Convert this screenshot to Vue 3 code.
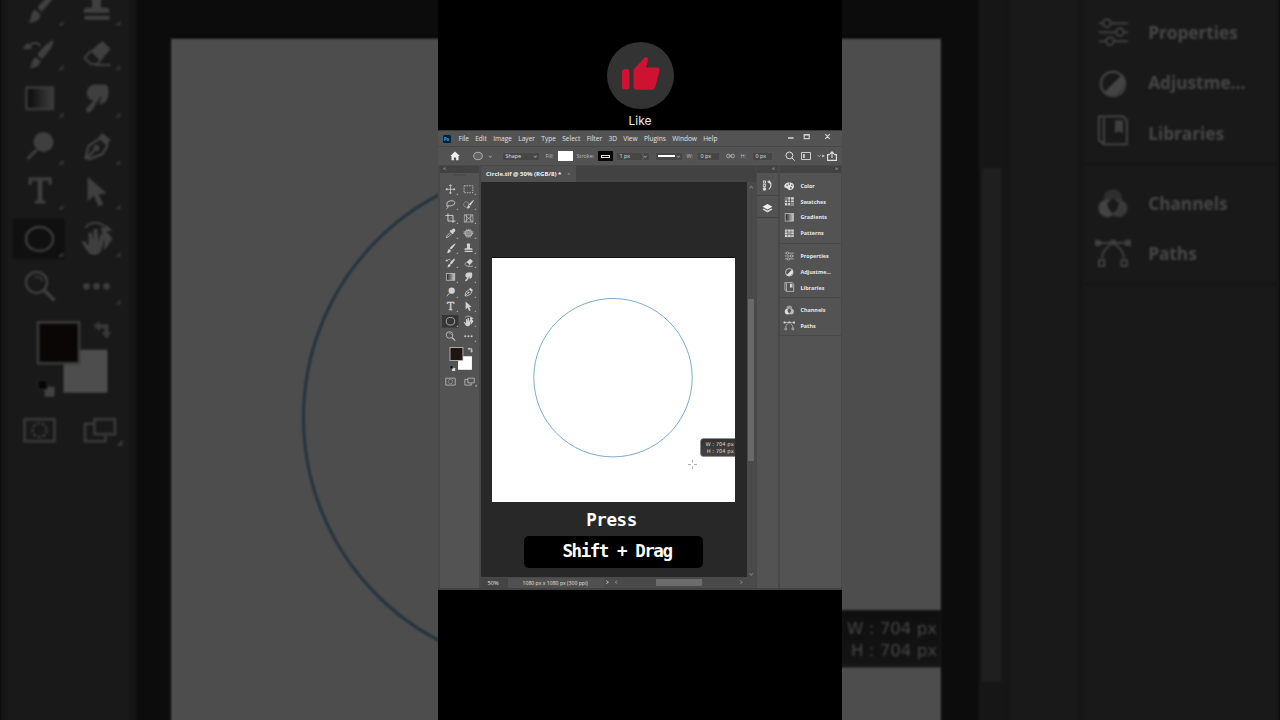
<template>
  <div class="stage">
    <div v-for="layer in layers" :key="layer" class="editor" :class="layer">
      <div class="menu-bar">
        <span class="ps-logo">Ps</span>
        <nav class="menu">
          <span v-for="m in menus" :key="m">{{ m }}</span>
        </nav>
        <svg class="window-btns" viewBox="0 0 48 16">
          <g fill="none" stroke="#d0d0d0" stroke-width="1.2">
            <path d="M1 7h5.6" stroke-width="1.6" />
            <path d="M17.2 3.6h5v4h-5z" />
            <path d="M17 4h5.4M38.2 3.2l4.6 4.6M42.8 3.2l-4.6 4.6" />
          </g>
        </svg>
      </div>

      <div class="options-bar">
        <svg class="o-home" viewBox="0 0 10 10"><path d="M5 .6L.2 5h1.3v4.3h2.4V6.4h2.2v2.9h2.4V5h1.3z" fill="#eee" /></svg>
        <svg class="o-ellipse" viewBox="0 0 10 10"><ellipse cx="5" cy="5" rx="4.3" ry="3.7" fill="#636363" stroke="#c4c4c4" stroke-width=".8" /></svg>
        <i class="chev o-chev1"></i>
        <span class="field o-shape">Shape<i class="chev"></i></span>
        <span class="o-label o-fill">Fill:</span>
        <span class="o-white"></span>
        <span class="o-label o-strokelabel">Stroke:</span>
        <span class="o-strokebox"><b></b></span>
        <span class="field o-px">1 px</span>
        <span class="field o-drop"><i class="chev"></i></span>
        <span class="field o-line"><b></b><i class="chev"></i></span>
        <span class="o-label o-w">W:</span>
        <span class="field o-wf">0 px</span>
        <svg class="o-link" viewBox="0 0 10 6"><g fill="none" stroke="#bbb" stroke-width=".9"><rect x=".7" y="1" width="3.8" height="4" rx="1.8" /><rect x="5.5" y="1" width="3.8" height="4" rx="1.8" /><path d="M3 3h4" /></g></svg>
        <span class="o-label o-h">H:</span>
        <span class="field o-hf">0 px</span>
        <svg class="o-search" viewBox="0 0 10 10"><g fill="none" stroke="#ddd" stroke-width="1"><circle cx="4.4" cy="4.4" r="3.4" /><path d="M6.8 6.8L9.6 9.6" /></g></svg>
        <svg class="o-layout" viewBox="0 0 10 10"><path d="M.5 1.5h9v7h-9z" fill="none" stroke="#ccc" /><path d="M2 3h1.8v4H2z" fill="#ccc" /></svg>
        <svg class="o-arrows" viewBox="0 0 8 6"><path d="M.5 2l1.7 1.7L3.9 2" fill="none" stroke="#aaa" stroke-width=".9" /><path d="M5.2 1.4L7.8 3 5.2 4.6z" fill="#ccc" /></svg>
        <svg class="o-share" viewBox="0 0 10 10"><path d="M2.8 3.6H.6v5.8h8.8V3.6H7.2M5 7V1M3 2.8L5 .8l2 2" fill="none" stroke="#e4e4e4" stroke-width="1.1" /></svg>
      </div>

      <div class="body">
        <div class="toolbox">
          <div class="strip left">«</div>
          <div class="grip"></div>
          <div class="tools">
            <span v-for="(t, i) in tools" :key="i" class="tool" :class="{ active: i === 18 }">
              <svg viewBox="0 0 60 46.4" v-html="t + (i === 20 ? '' : corner)"></svg>
            </span>
          </div>
          <svg class="swatches" viewBox="8 308 120 150">
            <rect x="62" y="350" width="44" height="43" fill="#fff" />
            <rect x="36.5" y="322.5" width="41" height="41" fill="#211514" stroke="#c2c2c2" stroke-width="2.6" />
            <g fill="#bdbdbd">
              <path d="M92 326l6-4.5v3h9v8h3l-5 6.500-5-6.500h3v-4h-5v3z" />
              <path d="M43 387h10v10H43z" fill="#d8d8d8" />
              <path d="M36.500 380.500h9v9h-9z" fill="#111" stroke="#888" />
              <path d="M115 446l6-6v6z" />
            </g>
            <g fill="none" stroke="#c0c0c0" stroke-width="2.5">
              <path d="M23 419.500h30v22H23z" />
              <circle cx="38" cy="430.500" r="7" stroke-dasharray="3 2" />
              <path d="M93 424H83.500v17.500H104V436" />
              <path d="M93 419.500h20.500v15H93z" />
            </g>
          </svg>
        </div>

        <div class="workspace">
          <div class="tabs">
            <div class="tab">Circle.tif @ 50% (RGB/8) * <span>×</span></div>
          </div>
          <div class="view">
            <div class="pasteboard">
              <div class="artboard">
                <svg class="drawing" viewBox="0 0 243 244">
                  <circle cx="121" cy="119.7" r="79.2" fill="none" stroke="#6aa3c2" stroke-width=".9" />
                  <path d="M196 206.500h3M202 206.500h3M200.500 202v2.500M200.500 208.500v2.500" stroke="#777" stroke-width=".6" />
                </svg>
                <div class="size-tip">
                  <span>W : 704 px</span>
                  <span>H : 704 px</span>
                </div>
              </div>
            </div>
            <div class="v-scroll">
              <i class="arrow up"></i>
              <b></b>
              <i class="arrow down"></i>
            </div>
          </div>
          <div class="status">
            <span class="zoom">50%</span>
            <span class="doc">1080 px x 1080 px (300 ppi)</span>
            <i class="arrow right first"></i>
            <i class="arrow back"></i>
            <b></b>
            <i class="arrow right last"></i>
          </div>
        </div>

        <div class="icon-dock">
          <div class="strip">«</div>
          <div class="dock-cell">
            <svg viewBox="0 0 12 12"><g fill="none" stroke="#ddd" stroke-width="1"><path d="M1.5 1h2.400v2.400H1.500zM1.500 4.800h2.400v2.400H1.500z" /><path d="M1.500 8.600h2.400V11H1.500z" fill="#ddd" /><path d="M6.500 1.800c4 0 4.500 5 1 8.400" stroke-width="1.3" /></g><path d="M8.500 0L5.600 2l2.900 2z" fill="#ddd" /></svg>
          </div>
          <div class="dock-cell">
            <svg viewBox="0 0 12 12"><path d="M6 1l5.400 3L6 7 .6 4z" fill="#f0f0f0" /><path d="M1.800 6L.6 7 6 10.300 11.400 7l-1.200-1L6 8.300z" fill="#d8d8d8" /></svg>
          </div>
        </div>

        <div class="panels">
          <div class="strip">»</div>
          <div v-for="(g, gi) in panelGroups" :key="gi" class="group" :class="'g' + gi">
            <div v-for="p in g" :key="p.name" class="panel-row">
              <svg viewBox="0 0 40 40" v-html="p.icon"></svg>
              <span>{{ p.name }}</span>
            </div>
          </div>
        </div>
      </div>
    </div>

    <div class="like">
      <div class="like-circle">
        <svg viewBox="0 0 40 36">
          <rect x="1" y="13" width="7.5" height="20.5" rx="3.2" fill="#cf1232" />
          <path d="M12.500 15.500c0-1.500.5-2.500 1.500-3.500L24 1.300c1-.9 2.900 0 2.900 1.700 0 3-1 5.400-2 8.500H36c2 0 3 1.700 2.500 3.400l-4.100 15.600c-.5 2-1.700 3.200-3.600 3.200H16c-2 0-3.500-1.500-3.500-3.500z" fill="#cf1232" />
        </svg>
      </div>
      <span>Like</span>
    </div>

    <div class="caption">
      <div class="press">Press</div>
      <div class="keys">Shift + Drag</div>
    </div>
  </div>
</template>

<script setup>
const layers = ['backdrop', 'front']

const menus = ['File', 'Edit', 'Image', 'Layer', 'Type', 'Select', 'Filter', '3D', 'View', 'Plugins', 'Window', 'Help']

const corner = '<path d="M48.500 41l5.500-5.500V41z" fill="#a8a8a8"/>'
const line = (d, w = 2.5) => `<path d="${d}" fill="none" stroke="#d2d2d2" stroke-width="${w}" stroke-linejoin="round"/>`
const solid = (d, c = '#d2d2d2') => `<path d="${d}" fill="${c}"/>`
const gradient = (x, y, w, h) =>
  `<defs><linearGradient id="ramp"><stop offset="0" stop-color="#222"/><stop offset="1" stop-color="#ccc"/></linearGradient></defs><rect x="${x}" y="${y}" width="${w}" height="${h}" fill="url(#ramp)" stroke="#c0c0c0" stroke-width="2.5"/>`

// two columns, left to right, top to bottom
const tools = [
  // move, marquee
  line('M30 12v22M18 23h24') + solid('M30 7l5 6H25zM30 39l5-6H25zM14 23l6-5v10zM46 23l-6-5v10z'),
  '<rect x="16" y="12" width="28" height="22" fill="none" stroke="#d2d2d2" stroke-width="2.5" stroke-dasharray="5 3"/>',
  // lasso, quick selection
  '<ellipse cx="31" cy="20" rx="13" ry="8" transform="rotate(-12 31 20)" fill="none" stroke="#d2d2d2" stroke-width="2.5"/>' + line('M20 25c-5 4 1 8 4 4M21 30c2 4-1 7-4 8'),
  '<ellipse cx="23" cy="24" rx="8" ry="9" fill="none" stroke="#c4c4c4" stroke-width="2.2" stroke-dasharray="4 2"/>' + solid('M46 9L31 23l5 5 11-17zM29 25l6 5c-1 6-6 7-11 6 4-3 3-7 5-11z'),
  // crop, frame
  line('M22 8v24h24M14 14h24v24', 3) + line('M24 30L36 17', 1),
  line('M17 12h27v23H17zM17 12l27 23M44 12L17 35M24 12v23M37 12v23', 1.8),
  // eyedropper, patch
  solid('M44 10c3 3 1 6-2 9l-3 3 1 2-3 2-10-10 3-3 2 1 4-4c3-3 6-2 8 0z') + line('M30 20L19 31l-2 6 6-2 11-11'),
  '<rect x="19" y="14" width="22" height="18" rx="6" fill="#8f8f8f" stroke="#d2d2d2" stroke-width="2"/>' + line('M25 9v5M30 9v5M35 9v5M25 32v5M30 32v5M35 32v5M14 19h5M14 24h5M41 19h5M41 24h5', 1.8),
  // brush, stamp
  solid('M46 7c-3 0-17 13-18 16l4 4C36 24 46 11 46 7zM26 25l5 5c-1 6-6 8-12 8 2-2 2-4 3-8 0-3 2-4 4-5z'),
  solid('M30 7c5 0 6 4 5 8-1 3-1 6 0 8h5c2 0 3 2 3 5H17c0-3 1-5 3-5h5c1-2 1-5 0-8-1-4 0-8 5-8zM18 31h25v4H18z'),
  // history brush, eraser
  solid('M44 11c-4 0-15 12-16 15l4 4c4-3 13-14 12-19zM26 28l5 4c-1 6-6 7-11 7 3-3 2-9 6-11zM13 20l5-6 5 6z') + line('M19 17c6-5 10-3 12 0', 2),
  solid('M36 12l8 8-10 12-10-10z') + line('M24 22l-6 7 6 6h6l4-3M28 36h16', 2),
  // gradient, smudge
  gradient(17, 11, 26.5, 21.5),
  solid('M23 10l4-2h13c2 3 3 9 1 13-1 4-4 7-8 7l2-5-11 12c-2 2-6 0-4-3l7-8c-7-1-9-9-4-14z') + '<path d="M35 20l-7 10" stroke="#606060" stroke-width="1.5"/>',
  // dodge, pen
  '<circle cx="34" cy="18" r="10" fill="#d2d2d2"/>' + line('M27 26l-9 9', 3),
  line('M34 14l7 7-5 9-13 5-4-1 3-12zM20 34l8-8') + solid('M36 9l8 7-4 5-8-8z') + '<circle cx="30" cy="24" r="3" fill="#d2d2d2"/>',
  // type, path selection
  '<text x="30.500" y="35" font-family="DejaVu Serif, serif" font-size="34" text-anchor="middle" fill="#d2d2d2" stroke="#d2d2d2" stroke-width="1.2">T</text>',
  solid('M21 8v25l6-6 5 11 5-2-5-10 8-1z'),
  // ellipse, rotate view
  '<ellipse cx="30" cy="23" rx="13.500" ry="12" fill="none" stroke="#c2c2c2" stroke-width="2.5"/>',
  solid('M15 26l3-1 4 5V17l3-1 2 9V13l4 0 1 13 2-8 4 1-2 11c-1 6-4 9-8 9-7 0-8-6-13-13zM34 12l3-1 9 12-9 12 1-10zM46 15h-11l5-6z') + line('M19 12c4-6 12-7 19-2', 2),
  // zoom, more
  '<circle cx="27" cy="19" r="10.500" fill="none" stroke="#c8c8c8" stroke-width="2.5"/>' + line('M35 27l10 10', 3.5) + line('M25 14c4-2 8 1 8 4', 1.5),
  '<g fill="#c8c8c8"><circle cx="20" cy="23" r="3.300"/><circle cx="30" cy="23" r="3.300"/><circle cx="40" cy="23" r="3.300"/></g>'
]

const panelGroups = [
  [
    { name: 'Color', icon: solid('M20 8c10 0 15 5 15 11 0 8-6 13-14 13-5 0-5-5-8-6-3 0-9-1-9-6C4 12 12 8 20 8z', '#e2e2e2') + '<g fill="#535353"><circle cx="13" cy="17" r="2.500"/><circle cx="20" cy="13" r="2.500"/><circle cx="28" cy="17" r="2.500"/><circle cx="25" cy="25" r="3"/></g>' },
    { name: 'Swatches', icon: solid('M6 7h28v26H6z', '#d8d8d8') + '<path d="M15 7v26M24 7v26M6 16h28M6 24h28" stroke="#444" stroke-width="2.500"/><path d="M6 7h9v9H6z" fill="#777"/><path d="M24 24h10v9H24z" fill="#888"/>' },
    { name: 'Gradients', icon: gradient(7, 8, 26, 24) },
    { name: 'Patterns', icon: solid('M6 8h28v24H6z', '#d8d8d8') + '<path d="M15 8v24M25 8v24M6 16h28M6 24h28" stroke="#555" stroke-width="2"/><path d="M17 17l6 6M23 17l-6 6M8 10l5 4M27 26l5 4" stroke="#666" stroke-width="1.500"/>' }
  ],
  [
    { name: 'Properties', icon: line('M6 10h4M18 10h17M6 19h17M31 19h4M6 28h7M21 28h14', 2) + '<g fill="none" stroke="#d2d2d2" stroke-width="2"><circle cx="14" cy="10" r="3.800"/><circle cx="27" cy="19" r="3.800"/><circle cx="17" cy="28" r="3.800"/></g>' },
    { name: 'Adjustme...', icon: '<circle cx="20" cy="20" r="12" fill="none" stroke="#d8d8d8" stroke-width="2.500"/>' + solid('M29 11a13 13 0 0 1-18 18z', '#e2e2e2') },
    { name: 'Libraries', icon: line('M6 5h24l4 4v24H11l-5-4zM11 7v25', 2.2) + solid('M22 9h8v13l-4-2-4 2z') }
  ],
  [
    { name: 'Channels', icon: '<circle cx="20" cy="14" r="9" fill="#9a9a9a"/><circle cx="14.500" cy="24" r="9" fill="#dcdcdc"/><circle cx="25.500" cy="24" r="9" fill="#bcbcbc"/>' + solid('M20 14l6 5-2 6-4 4-4-4-2-6z', '#555') },
    { name: 'Paths', icon: solid('M2 5h6v6H2zM32 5h6v6h-6zM17 5h6v5h-6z') + line('M6 8h28M17 10c-5 4-8 8-8 13M23 10c5 4 8 8 8 13M6 25h5.500v6H6zM28.500 25H34v6h-5.500z', 2) }
  ]
]
</script>

<style>
body { background: #000; overflow: hidden; }
</style>

<style scoped>
.stage { position: relative; width: 1280px; height: 720px; overflow: hidden; background: #000; font-family: "Open Sans", sans-serif; }
.stage svg { display: block; }

/* the editor is drawn twice: dimmed full-width copy behind, small one in front */
.editor { position: absolute; width: 404px; height: 460px; display: flex; flex-direction: column; background: #535353; color: #e0e0e0; box-sizing: border-box; border-top: 1px solid #3a3a3a; border-bottom: 2px solid #424242; }
.backdrop { left: 0; top: -367.5px; transform: scale(3.168); transform-origin: 0 0; opacity: 0.3; filter: blur(0.35px); }
.front { left: 438px; top: 130px; box-shadow: 0 -130px 0 130px #000, 0 200px 0 0 #000; clip-path: inset(-130px 0 -130px 0); }

.menu-bar { display: flex; align-items: center; height: 16px; flex: none; padding-left: 4.5px; border-bottom: 1px solid #474747; box-sizing: border-box; }
.ps-logo { width: 8px; height: 8px; line-height: 8px; border-radius: 1.5px; background: #001e36; color: #31a8ff; font-size: 5px; font-weight: 700; text-align: center; }
.menu { display: flex; gap: 6.35px; margin-left: 8px; font-size: 6.55px; line-height: 15px; white-space: nowrap; font-weight: 500; }
.window-btns { width: 48px; height: 16px; margin-left: auto; margin-right: 7.5px; }

.options-bar { display: flex; align-items: center; height: 19px; flex: none; font-size: 5.4px; line-height: 8px; white-space: nowrap; border-bottom: 1px solid #484848; box-sizing: border-box; }
.options-bar > * { flex: none; box-sizing: border-box; }
.field { height: 9px; display: flex; align-items: center; background: #464646; border: 0.5px solid #545454; padding-left: 3px; }
.field .chev { margin: 0 2px 0 auto; }
.chev { width: 2.5px; height: 2.5px; border: solid #999; border-width: 0 0.6px 0.6px 0; transform: translateY(-0.5px) rotate(45deg) scale(0.85); box-sizing: border-box; }
.o-label { color: #bcbcbc; }
.o-home { width: 10px; height: 10px; margin-left: 12px; }
.o-ellipse { width: 10px; height: 10px; margin-left: 13px; }
.o-chev1 { margin-left: 5.5px; }
.o-shape { width: 38px; margin-left: 10.5px; }
.o-fill { width: 12px; margin-left: 6px; }
.o-white { width: 15px; height: 9.5px; background: #fff; }
.o-strokelabel { width: 20px; margin-left: 4px; }
.o-strokebox { width: 15px; height: 9.5px; margin-left: 1px; background: #050505; display: flex; align-items: center; justify-content: center; }
.o-strokebox b { width: 9px; height: 3px; border: 1px solid #ddd; box-sizing: border-box; }
.o-px { width: 27px; margin-left: 3px; }
.o-drop { width: 7px; padding: 0; }
.o-line { width: 28px; margin-left: 5px; padding-left: 2px; }
.o-line b { width: 17px; height: 1.2px; background: #fff; }
.o-w { width: 9px; margin-left: 4px; }
.o-wf { width: 23px; margin-left: 1px; }
.o-link { width: 9px; height: 6px; margin-left: 6px; }
.o-h { width: 9px; margin-left: 6px; }
.o-hf { width: 21px; margin-left: 2px; }
.o-search { width: 10px; height: 10px; margin-left: 12px; }
.o-layout { width: 10px; height: 10px; margin-left: 6.5px; }
.o-arrows { width: 8px; height: 6px; margin-left: 5.5px; }
.o-share { width: 10px; height: 10px; margin-left: 2px; }

.body { flex: 1; min-height: 0; display: flex; padding-left: 2px; background: #484848; }
.strip { height: 7px; line-height: 5.5px; flex: none; background: #424242; color: #bbb; font-size: 6px; text-align: right; padding-right: 3px; box-sizing: border-box; }
.strip.left { text-align: left; padding-left: 3px; }

.toolbox { width: 39px; background: #535353; display: flex; flex-direction: column; }
.grip { height: 1.5px; margin: 1px 13px 6.7px; background: #4c4c4c; }
.tools { display: grid; grid-template-columns: 18.94px 18.94px; grid-auto-rows: 14.65px; padding-left: 0.5px; }
.tool { display: block; }
.tool svg { width: 18.94px; height: 14.65px; }
.tool.active { background: linear-gradient(#363636, #363636) 1.3px 1px / 16.5px 12.65px no-repeat; }
.swatches { width: 37.9px; height: 47.3px; margin: -0.4px 0 0 0.5px; }

.workspace { width: 275px; margin-left: 1.5px; display: flex; flex-direction: column; background: #282828; }
.tabs { height: 16px; flex: none; background: #424242; }
.tab { display: flex; justify-content: space-between; width: 95px; height: 16px; line-height: 16.5px; padding: 0 5px 0 5.5px; font-size: 6.05px; font-weight: 700; background: #505050; box-sizing: border-box; color: #f0f0f0; white-space: nowrap; }
.tab span { font-weight: 400; color: #999; }
.view { flex: 1; min-height: 0; display: flex; }
.pasteboard { flex: 1; padding: 76px 0 0 11.5px; }
.artboard { position: relative; width: 243px; height: 244px; background: #fff; overflow: hidden; box-shadow: 0 -0.6px 0 #000; }
.drawing { width: 243px; height: 244px; }
.size-tip { position: absolute; left: 209px; top: 181.1px; width: 34px; height: 17px; padding: 2.2px 1.2px 0 0; border-radius: 2px 0 0 2px; background: linear-gradient(#333, #444); box-shadow: 0 0 0 0.5px #222; box-sizing: border-box; font-family: "DejaVu Sans", sans-serif; font-size: 5.25px; line-height: 6.7px; color: #ddd; display: flex; flex-direction: column; align-items: flex-end; white-space: nowrap; }
.v-scroll { width: 9px; background: #4a4a4a; display: flex; flex-direction: column; align-items: center; }
.v-scroll b { width: 6.5px; height: 161.5px; background: #696969; margin-top: 110.2px; }
.arrow { width: 2.5px; height: 2.5px; border: solid #7c7c7c; border-width: 0 0.6px 0.6px 0; box-sizing: border-box; }
.up { transform: rotate(225deg); margin-top: 4.5px; }
.down { transform: rotate(45deg); margin: auto 0 3px; }
.right { transform: rotate(-45deg); }
.back { transform: rotate(135deg); }

.status { height: 11px; flex: none; display: flex; align-items: center; background: #4a4a4a; font-size: 5.7px; line-height: 10px; white-space: nowrap; }
.zoom { width: 27.5px; padding-left: 7px; box-sizing: border-box; background: #444; }
.doc { width: 96px; padding-left: 14.5px; box-sizing: border-box; background: #505050; font-size: 5.15px; }
.first { margin-left: 0.5px; border-color: #aaa; }
.back { margin-left: 8.5px; }
.status b { width: 46px; height: 6.5px; margin-left: 37.5px; background: #6c6c6c; }
.last { margin-left: 37px; }

.icon-dock { width: 21.5px; margin-left: 1px; background: #535353; display: flex; flex-direction: column; }
.dock-cell { height: 22.7px; flex: none; display: flex; align-items: center; justify-content: center; border-bottom: 1px solid #424242; padding-top: 3px; box-sizing: border-box; }
.dock-cell svg { width: 11px; height: 11px; }

.panels { flex: 1; margin-left: 1.5px; margin-right: 1px; background: #535353; }
.group { border-bottom: 1px solid #484848; box-sizing: border-box; }
.g0 { height: 71px; padding-top: 5px; }
.g1 { height: 53.6px; padding-top: 4.4px; }
.g2 { height: 38.5px; padding-top: 4.9px; }
.panel-row { display: flex; align-items: center; height: 15.7px; padding-left: 3.3px; font-size: 5.45px; font-weight: 700; white-space: nowrap; color: #e6e6e6; }
.panel-row svg { width: 12.63px; height: 12.63px; margin-right: 5px; }

.like { position: absolute; left: 438px; top: 0; width: 404px; height: 130px; padding-top: 41.5px; box-sizing: border-box; display: flex; flex-direction: column; align-items: center; background: #000; }
.like-circle { width: 67px; height: 67px; border-radius: 50%; background: #333; display: flex; align-items: center; justify-content: center; flex: none; }
.like-circle svg { width: 40px; height: 36px; margin: 0 -1px 1.5px 0; }
.like span { margin-top: 4px; font-family: Inter, sans-serif; font-size: 12px; line-height: 15px; color: #e8e8e8; }

.caption { position: absolute; left: 524px; top: 506px; width: 179px; color: #fff; font-family: "DejaVu Sans Mono", monospace; font-weight: 700; font-size: 17.5px; text-align: center; white-space: pre; }
.press { height: 30px; line-height: 28px; letter-spacing: -0.4px; padding-right: 4px; }
.keys { height: 32px; line-height: 30px; background: #000; border-radius: 5px; letter-spacing: -1.45px; padding-left: 7px; width: 172px; }
</style>
